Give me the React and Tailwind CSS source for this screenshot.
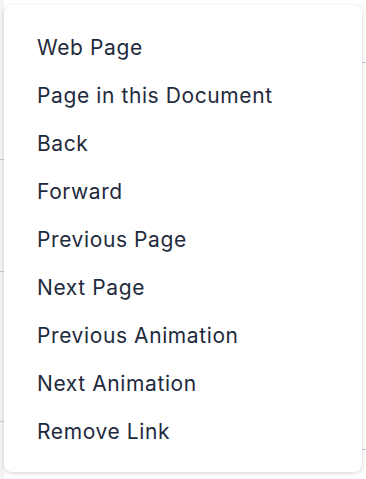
import React from "react";

const items = [
  "Web Page",
  "Page in this Document",
  "Back",
  "Forward",
  "Previous Page",
  "Next Page",
  "Previous Animation",
  "Next Animation",
  "Remove Link",
];

export default function App() {
  return (
    <div className="relative w-[366px] h-[479px] bg-white overflow-hidden" style={{ fontFamily: "Inter, 'Noto Sans', sans-serif" }}>
      {/* page behind the menu */}
      <div className="absolute left-0 top-0 w-[4px] h-full bg-[#f3f4f6]">
        <div className="mt-[159px] h-px bg-[#c9ccd1]" />
        <div className="mt-[111px] h-px bg-[#c9ccd1]" />
        <div className="mt-[149px] h-px bg-[#c9ccd1]" />
      </div>
      <div className="absolute right-0 top-0 w-[4px] h-full">
        <div className="mt-[62px] h-px bg-[#c9ccd1]" />
        <div className="mt-[386px] h-px bg-[#c9ccd1]" />
      </div>

      {/* dropdown menu */}
      <div className="absolute left-[4px] top-[5px] w-[358px] rounded-lg bg-white shadow-[0_1px_4px_rgba(0,0,0,0.18)] pt-[19px] pb-[16px]">
        <ul>
          {items.map((t) => (
            <li key={t} className="h-[48px] flex items-center pl-[33px] text-[21px] tracking-[0.6px] text-[#1f2a3d] [font-variant-ligatures:none] cursor-pointer hover:bg-gray-50">
              {t}
            </li>
          ))}
        </ul>
      </div>
    </div>
  );
}
